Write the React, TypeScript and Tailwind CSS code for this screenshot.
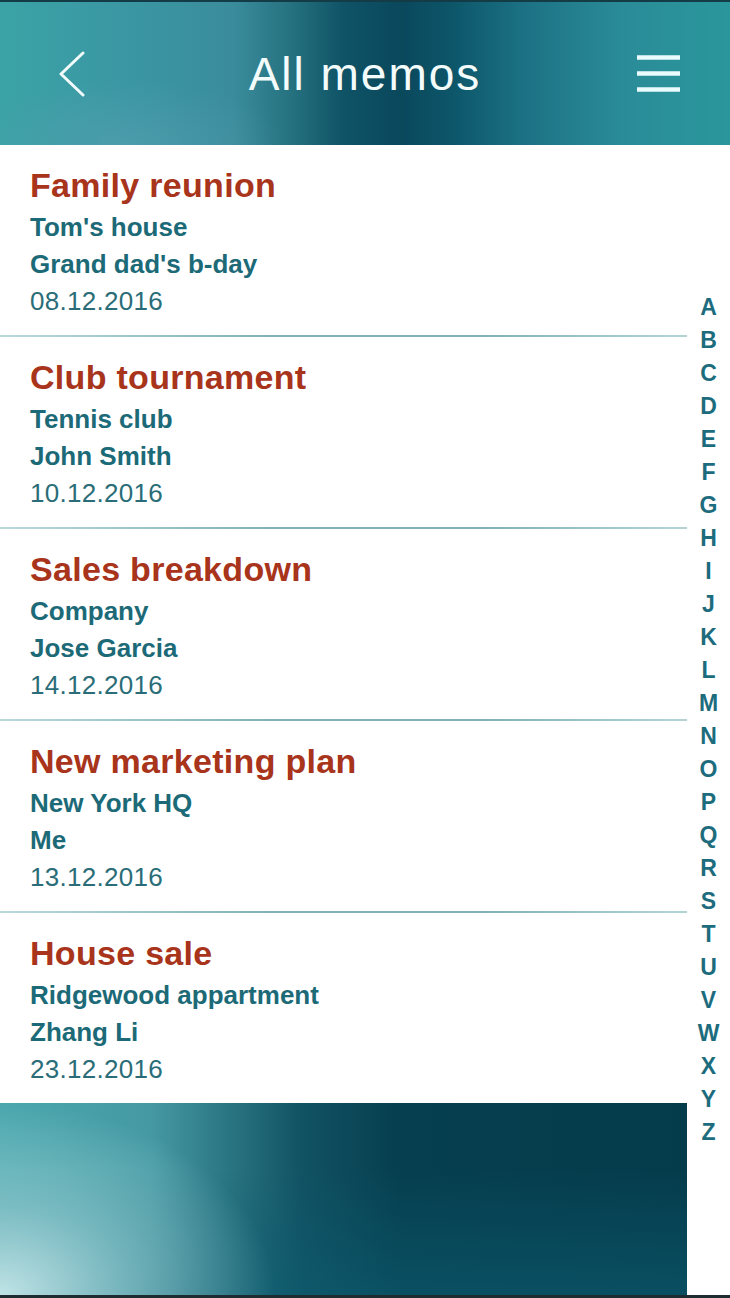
import React from "react";

type Memo = {
  title: string;
  place: string;
  person: string;
  date: string;
};

const memos: Memo[] = [
  { title: "Family reunion", place: "Tom's house", person: "Grand dad's b-day", date: "08.12.2016" },
  { title: "Club tournament", place: "Tennis club", person: "John Smith", date: "10.12.2016" },
  { title: "Sales breakdown", place: "Company", person: "Jose Garcia", date: "14.12.2016" },
  { title: "New marketing plan", place: "New York HQ", person: "Me", date: "13.12.2016" },
  { title: "House sale", place: "Ridgewood appartment", person: "Zhang Li", date: "23.12.2016" },
];

const letters = "ABCDEFGHIJKLMNOPQRSTUVWXYZ".split("");

const MemoRow = ({ memo, last }: { memo: Memo; last: boolean }) => (
  <li className="flex flex-col">
    <div className="pl-[30px] pt-[20px] pb-[15px]">
      <h2 className="text-[34px] leading-[40px] font-bold tracking-[0.3px] text-[#a8341b]">{memo.title}</h2>
      <p className="mt-1 text-[26px] leading-[37px] font-bold text-[#1c6a77]">{memo.place}</p>
      <p className="text-[26px] leading-[37px] font-bold text-[#1c6a77]">{memo.person}</p>
      <p className="text-[26px] leading-[37px] tracking-[0.3px] text-[#2a6d78]">{memo.date}</p>
    </div>
    {!last && (
      <div className="h-[2px] bg-[linear-gradient(90deg,#b9d9db_0%,#7fb1b6_40%,#7fb1b6_70%,#b3d5d8_100%)]" />
    )}
  </li>
);

export default function App() {
  return (
    <div
      className="w-[730px] h-[1298px] flex flex-col bg-white overflow-hidden"
      style={{ fontFamily: '"Liberation Sans", Arial, sans-serif' }}
    >
      <header className="h-[145px] flex flex-col bg-[radial-gradient(ellipse_22%_45%_at_17%_100%,rgba(90,160,178,0.55)_0%,rgba(90,160,178,0)_100%),linear-gradient(90deg,#3ba3a6_0%,#3a96a3_18%,#3a8c9c_32%,#25717f_40%,#0f5366_47%,#0a485c_55%,#0d566a_62%,#1c7284_72%,#2a8b98_85%,#2a979c_100%)]">
        <div className="h-[2px] bg-[#143c46]" />
        <div className="flex-1 flex items-center">
          <div className="w-[120px] pl-[58px] flex items-center">
            <svg width="28" height="46" viewBox="0 0 28 46" fill="none">
              <path d="M25 2 L3 23 L25 44" stroke="#f2fbfb" strokeWidth="3" strokeLinecap="round" strokeLinejoin="round" />
            </svg>
          </div>
          <h1 className="flex-1 text-center text-[46px] leading-[46px] tracking-[2px] text-[#f4fbfb]">All memos</h1>
          <div className="w-[120px] pr-[50px] flex justify-end items-center">
            <svg width="43" height="37" viewBox="0 0 43 37" fill="none">
              <path d="M0 2.5 H43 M0 18.5 H43 M0 34.5 H43" stroke="#e9fbfb" strokeWidth="4.5" />
            </svg>
          </div>
        </div>
      </header>

      <div className="flex-1 flex">
        <div className="w-[687px] flex flex-col">
          <ul className="flex flex-col">
            {memos.map((m, i) => (
              <MemoRow key={m.title} memo={m} last={i === memos.length - 1} />
            ))}
          </ul>
          <div className="flex-1 bg-[radial-gradient(ellipse_40%_100%_at_0%_100%,rgba(200,233,235,0.95)_0%,rgba(150,205,210,0.7)_45%,rgba(120,190,198,0)_100%),linear-gradient(180deg,rgba(6,58,74,0)_35%,rgba(12,92,112,0.6)_100%),linear-gradient(90deg,#4aa7ad_0%,#4599a3_22%,#2b7683_33%,#115263_44%,#063f4f_58%,#053c4c_100%)]" />
        </div>
        <nav className="flex-1 flex flex-col items-center justify-center">
          {letters.map((l) => (
            <span key={l} className="text-[23px] leading-[33px] font-bold text-[#1d6c7e]">
              {l}
            </span>
          ))}
        </nav>
      </div>

      <div className="h-[3px] bg-[#1d2c31]" />
    </div>
  );
}
